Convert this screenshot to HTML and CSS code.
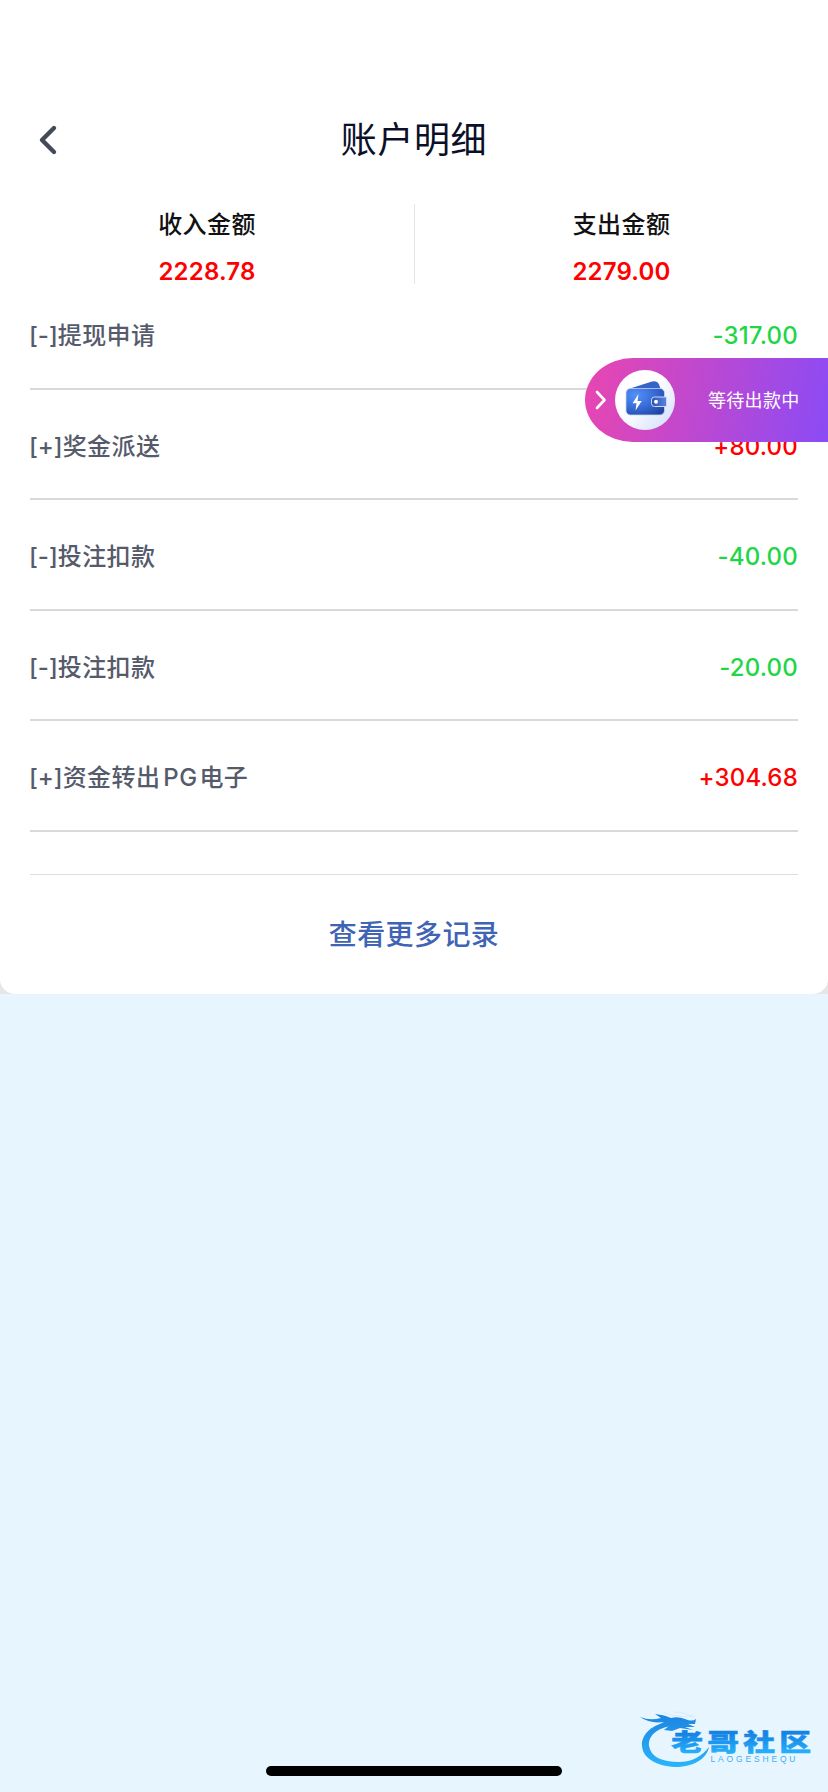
FILE: index.html
```html
<!DOCTYPE html>
<html lang="zh-CN">
<head>
    <meta charset="UTF-8">
    <meta name="viewport" content="width=device-width, initial-scale=1.0">
    <title>账户明细</title>
    <link rel="stylesheet" href="styles.css">
</head>
<body>
    <div class="card-wrap">
        <main class="card">
            <header class="header">
                <svg class="back" width="20" height="32" viewBox="0 0 20 32">
                    <path d="M16 4 L4 16 L16 28" fill="none" stroke="#454a5b" stroke-width="4.4" stroke-linecap="round" stroke-linejoin="round"/>
                </svg>
                <h1 class="title">账户明细</h1>
            </header>

            <section class="summary">
                <div class="summary-item">
                    <div class="summary-label">收入金额</div>
                    <div class="summary-value">2228.78</div>
                </div>
                <div class="summary-item">
                    <div class="summary-label">支出金额</div>
                    <div class="summary-value">2279.00</div>
                </div>
            </section>

            <ul class="list">
                <li class="row"><span class="name"><span class="sign">[-]</span>提现申请</span><span class="amount out">-317.00</span></li>
                <li class="row"><span class="name"><span class="sign">[+]</span>奖金派送</span><span class="amount in">+80.00</span></li>
                <li class="row"><span class="name"><span class="sign">[-]</span>投注扣款</span><span class="amount out">-40.00</span></li>
                <li class="row"><span class="name"><span class="sign">[-]</span>投注扣款</span><span class="amount out">-20.00</span></li>
                <li class="row"><span class="name"><span class="sign">[+]</span>资金转出<span class="latin">PG</span>电子</span><span class="amount in">+304.68</span></li>
            </ul>

            <a class="more">查看更多记录</a>
        </main>
    </div>

    <!-- 出款状态悬浮条 -->
    <div class="float-bar">
        <svg class="float-arrow" width="14" height="22" viewBox="0 0 14 22">
            <path d="M3 3 L10.5 11 L3 19" fill="none" stroke="#fff" stroke-width="2.6" stroke-linecap="round" stroke-linejoin="round"/>
        </svg>
        <svg class="wallet" width="60" height="60" viewBox="0 0 60 60">
            <defs>
                <linearGradient id="disc" x1="0" y1="0" x2="1" y2="1">
                    <stop offset="0.45" stop-color="#fff"/>
                    <stop offset="1" stop-color="#cddafd"/>
                </linearGradient>
                <radialGradient id="body" cx="0.25" cy="0.25" r="0.9">
                    <stop offset="0" stop-color="#5490f8"/>
                    <stop offset="0.55" stop-color="#386bd6"/>
                    <stop offset="1" stop-color="#2145a0"/>
                </radialGradient>
                <linearGradient id="clasp" x1="0" y1="0" x2="1" y2="0">
                    <stop offset="0" stop-color="#2d50ad"/>
                    <stop offset="1" stop-color="#5784e0"/>
                </linearGradient>
            </defs>
            <circle cx="30" cy="30" r="30" fill="url(#disc)"/>
            <path d="M15 18.5 L37 11.5 Q42 10.3 44 14.5 L46 20 H15 Z" fill="#3563c6"/>
            <rect x="11" y="18.5" width="38.5" height="26.5" rx="4.5" fill="url(#body)" stroke="#c3d6fa" stroke-width="0.8"/>
            <path d="M36.5 30 Q36.5 27 39.5 27 H51.5 V36.5 H39.5 Q36.5 36.5 36.5 33.5 Z" fill="url(#clasp)" stroke="#c9d9fa" stroke-width="1"/>
            <circle cx="41" cy="31.7" r="2" fill="#fff"/>
            <path d="M23.5 24 L17.5 33.3 H21.5 L20.5 40.5 L26.7 31 H22.5 Z" fill="#fff"/>
        </svg>
        <span class="float-text">等待出款中</span>
    </div>

    <div class="watermark">
        <svg width="180" height="64" viewBox="0 0 180 64">
            <defs>
                <linearGradient id="ring" gradientUnits="userSpaceOnUse" x1="0" y1="6" x2="0" y2="60">
                    <stop offset="0" stop-color="#1c82e0"/>
                    <stop offset="1" stop-color="#2ab4fa"/>
                </linearGradient>
                <linearGradient id="word" x1="0" y1="0" x2="0" y2="1">
                    <stop offset="0.3" stop-color="#1583e4"/>
                    <stop offset="0.85" stop-color="#25b0fb"/>
                </linearGradient>
            </defs>
            <!-- 龙身 -->
            <path d="M31 16 C12 17 1 29 2 40 C3 54 20 61 38 61 C55 60 67 52 69 41 C62 50 52 56 39 56 C22 56 11 51 9 40 C8 30 17 21 34 20 Z" fill="url(#ring)"/>
            <!-- 龙头 -->
            <path d="M0 11 Q10 15 21 12 L15 8 Q25 9 31 12 Q38 10 45 13 Q52 16 56 13 L55 18 L48 18 L55 21 L45 21 L53 24 L40 22 L32 25 L24 24 L29 20 L18 19 L24 16 Q10 18 0 11 Z" fill="url(#ring)"/>
            <path d="M23 6 Q35 12 53 10 M34 6 Q46 6 55 12" fill="none" stroke="#cfe7fb" stroke-width="0.7"/>
            <text class="wm-name" x="24.5" y="38.5" textLength="118.5" lengthAdjust="spacing" transform="translate(2.3 11.5) scale(1.18 0.88)" fill="url(#word)" stroke="url(#word)">老哥社区</text>
            <text class="wm-latin" x="70.5" y="55.6" textLength="85" lengthAdjust="spacing">LAOGESHEQU</text>
        </svg>
    </div>

    <div class="home-bar"></div>
</body>
</html>
```
FILE: styles.css
```css
* {
    box-sizing: border-box;
}
body {
    position: relative;
    height: 1792px;
    margin: 0;
    overflow: hidden;
    background: #e7f5ff;
    font-family: Inter, "Noto Sans CJK SC", sans-serif;
}
.card-wrap {
    background: #e6e6e6;
}
.card {
    height: 994px;
    padding-top: 100px;
    background: #fff;
    border-radius: 0 0 15px 15px;
}
.header {
    display: grid;
    grid-template-columns: 96px 1fr 96px;
    align-items: center;
    height: 80px;
}
.back {
    margin-left: 38px;
}
.title {
    margin: 0;
    color: #0b1029;
    font-size: 36px;
    font-weight: 400;
    letter-spacing: 0.6px;
    line-height: 78px;
    text-align: center;
}
.summary {
    display: grid;
    grid-template-columns: 1fr 1fr;
    height: 80px;
    margin-top: 24px;
}
.summary-item {
    height: 80px;
    text-align: center;
}
.summary-item:last-child {
    border-left: 1px solid #e5e5e5;
}
.summary-label {
    height: 42px;
    color: #111;
    font-size: 24px;
    font-weight: 500;
    letter-spacing: 0.4px;
    line-height: 42px;
}
.summary-value {
    color: #f00;
    font-size: 24px;
    font-weight: 600;
    letter-spacing: 0.2px;
    line-height: 52px;
}
.list {
    margin: 0 30px;
    padding: 0 0 42px;
    list-style: none;
    border-bottom: 1px solid #dedede;
}
.row {
    display: flex;
    justify-content: space-between;
    height: 110.4px;
    padding-top: 34px;
    border-bottom: 2px solid #d9d9d9;
    font-size: 24px;
    line-height: 46px;
}
.row:first-child {
    height: 106px;
    padding-top: 29px;
}
.name {
    color: #555b6b;
    font-weight: 500;
    letter-spacing: 0.4px;
}
.sign {
    margin-left: -1px;
    letter-spacing: 0;
}
.latin {
    margin: 0 2px 0 3px;
    letter-spacing: 0.4px;
}
.amount {
    font-weight: 500;
    letter-spacing: 0.2px;
}
.in {
    color: #f00;
}
.out {
    color: #1fd647;
}
.more {
    display: block;
    color: #3f63b5;
    font-size: 28px;
    font-weight: 500;
    letter-spacing: 0.4px;
    line-height: 120px;
    text-align: center;
}
.float-bar {
    position: absolute;
    top: 358px;
    right: 0;
    display: flex;
    align-items: center;
    width: 243px;
    height: 84px;
    padding-left: 9px;
    border-radius: 48px 0 0 48px / 42px 0 0 42px;
    background: linear-gradient(100deg, #e946b0 0%, #8b4bf5 100%);
}
.wallet {
    margin-left: 7px;
}
.float-text {
    margin-left: 33px;
    padding-bottom: 2px;
    color: #fff;
    font-size: 18px;
    letter-spacing: 0.3px;
    white-space: nowrap;
}
.watermark {
    position: absolute;
    top: 1706px;
    left: 640px;
}
.watermark svg {
    display: block;
}
.wm-name {
    font-family: "Noto Sans CJK SC", sans-serif;
    font-size: 27px;
    font-weight: 900;
    stroke-width: 0.6px;
}
.wm-latin {
    fill: #45aef0;
    font-family: "Liberation Sans", sans-serif;
    font-size: 8.5px;
}
.home-bar {
    position: absolute;
    top: 1766px;
    left: 266px;
    width: 296px;
    height: 10px;
    border-radius: 5px;
    background: #000;
}
```
